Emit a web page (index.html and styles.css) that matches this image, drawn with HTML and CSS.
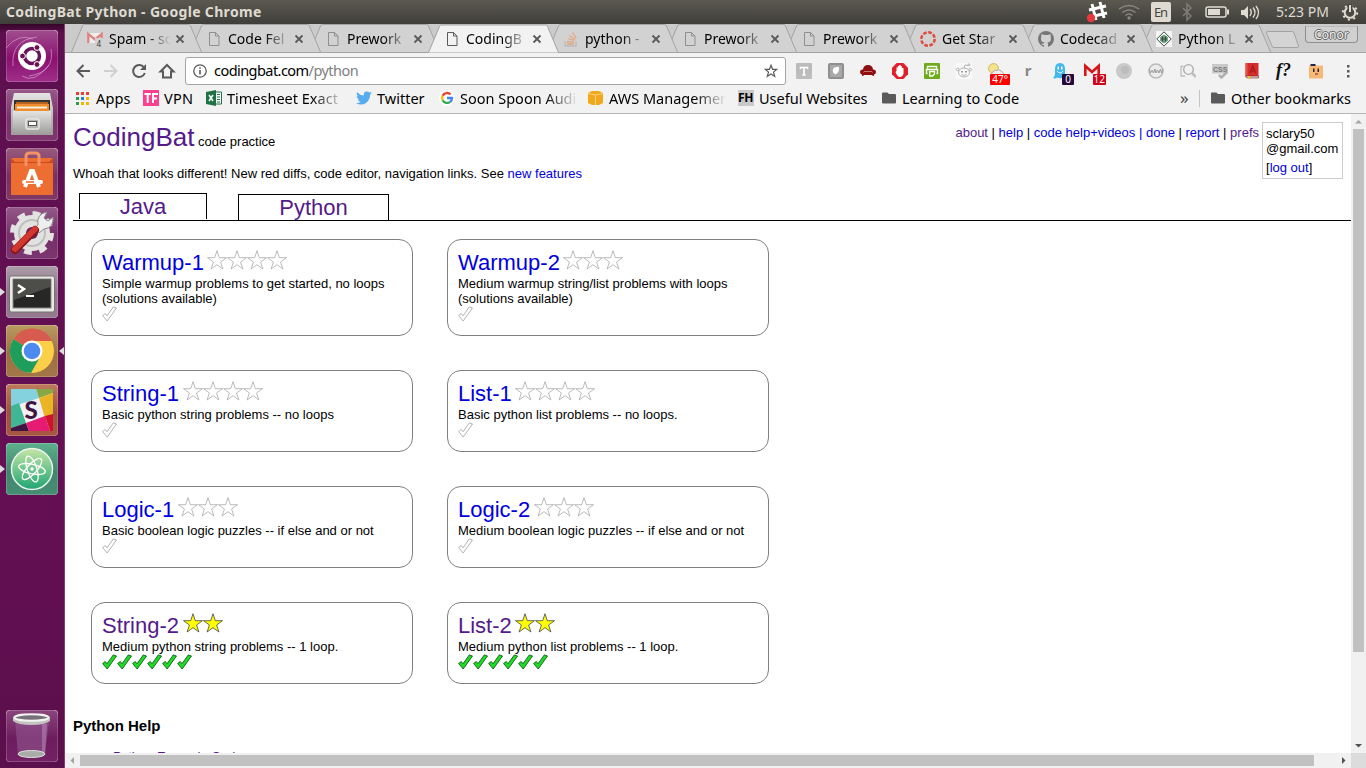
FILE: index.html
```html
<!DOCTYPE html>
<html lang="en">
<head>
<meta charset="utf-8">
<title>CodingBat Python</title>
<link rel="stylesheet" href="styles.css">
</head>
<body>
<svg class="defs" aria-hidden="true">
  <defs>
    <linearGradient id="steel" x1="0" y1="0" x2="0" y2="1"><stop offset="0" stop-color="#e4e4e2"/><stop offset="1" stop-color="#9b9b99"/></linearGradient>
    <linearGradient id="atomGreen" x1="0" y1="0" x2="0" y2="1"><stop offset="0" stop-color="#c5e6a5"/><stop offset="1" stop-color="#1fa574"/></linearGradient>
    <linearGradient id="dash" x1="0" y1="0" x2="0" y2="1"><stop offset="0" stop-color="#a04f8e"/><stop offset=".55" stop-color="#8a0f70"/><stop offset="1" stop-color="#a0308a"/></linearGradient>
  </defs>
  <symbol id="tab" viewBox="0 0 131 28"><path class="tab-shape" d="M.5 28 11.500 2Q12 .5 13.500 .5H117.500Q119 .5 119.500 2L130.500 28"/></symbol>
  <symbol id="page" viewBox="0 0 16 16"><path d="M3.500 1.500h6l3.500 3.500v9.500h-9.500zM9.500 1.500v3.500h3.500" fill="none" stroke="currentColor"/></symbol>
  <symbol id="close" viewBox="0 0 10 10"><path d="m1.500 1.500 7 7m0-7-7 7" stroke="#5a5a5a" stroke-width="1.800"/></symbol>
  <symbol id="folder" viewBox="0 0 14 12"><path d="M0 1.500Q0 .5 1 .5h4.500l1.500 1.500h6q1 0 1 1v7.500q0 1-1 1h-12q-1 0-1-1z" fill="#5a5a5a"/></symbol>
  <symbol id="star" viewBox="0 0 20 20"><path d="m10 .7 2.300 7h7.200l-5.900 4.300 2.300 7-5.900-4.300-5.900 4.300 2.300-7-5.900-4.300h7.200z" fill="currentColor"/></symbol>
  <symbol id="check" viewBox="0 0 15 15"><path d="M.6 9.500 3.300 7.500 5 9.800 11.300 .9 14.500 2 5.200 15z"/></symbol>
</svg>

<header class="panel">
  <span class="panel-title">CodingBat Python - Google Chrome</span>
  <svg class="tray" width="290" height="24" viewBox="1076 0 290 24">
    <g fill="none" stroke="#fff" stroke-width="3"><path d="m1092 4 4 16M1100 2l4 16M1089 10l17-4M1090 17l17-4"/></g>
    <circle cx="1091" cy="18" r="4.200" fill="#e8383f"/>
    <g fill="none" stroke="#89877f" stroke-width="1.500"><path d="M1119 9q10-7 20 0M1122.500 12.500q6.500-5 13 0M1125.500 15.500q3.500-3 7 0"/></g><circle cx="1129" cy="18" r="1.700" fill="#89877f"/>
    <rect x="1151" y="2" width="20" height="20" rx="2" fill="#dfdbd2"/><text x="1154" y="17" class="lang" textLength="14">En</text>
    <path d="m1183 8 8 8-4 4V4l4 4-8 8" fill="none" stroke="#7f7d75" stroke-width="1.500"/>
    <rect x="1206" y="7" width="20" height="10" rx="2" fill="none" stroke="#dfdbd2" stroke-width="1.500"/><path d="M1208 9h12v6h-12zM1227 9.500h2v5h-2z" fill="#dfdbd2"/>
    <path d="M1241 10h3l4-4v13l-4-4h-3z" fill="#dfdbd2"/><path d="M1250 9q2.500 3 0 7M1253 7.500q4 5 0 10M1256 6q5 6.500 0 13" fill="none" stroke="#dfdbd2" stroke-width="1.400"/>
    <text x="1276" y="17" class="clock" textLength="53">5:23 PM</text>
    <circle cx="1350" cy="12.500" r="5.300" fill="none" stroke="#dfdbd2" stroke-width="2"/><circle cx="1350" cy="12.500" r="7.200" fill="none" stroke="#dfdbd2" stroke-width="2" stroke-dasharray="2.200 3.450"/><path d="M1350 4v8" stroke="#45443f" stroke-width="5"/><path d="M1350 5v7" stroke="#dfdbd2" stroke-width="2"/>
  </svg>
</header>

<div class="desktop">
<nav class="launcher">
  <svg class="tile" viewBox="0 0 52 52"><rect class="plate solid" width="52" height="52" rx="4" fill="url(#dash)"/><path d="M7 36Q5 10 31 7M45 19Q49 42 23 46M0 18Q12 3 27 9M16 46Q28 54 43 35" fill="none" stroke="#d8a7cf" opacity=".65"/><circle cx="26" cy="26" r="14" fill="#fff"/><circle cx="26" cy="26" r="7.500" fill="none" stroke="#6a1258" stroke-width="3.500"/><g fill="#6a1258" stroke="#fff"><circle cx="16.500" cy="26" r="2.900"/><circle cx="31" cy="17.500" r="2.900"/><circle cx="31" cy="34.500" r="2.900"/></g></svg>
  <svg class="tile" viewBox="0 0 52 52"><rect class="plate" width="52" height="52" rx="4" fill="#7a2b68"/><path d="M8 4h36l3 15v27H5V18z" fill="url(#steel)"/><path d="M8 11h36v10H8z" fill="#38332e"/><path d="M10 13h32v2H10z" fill="#b96522"/><path d="M9 15h34v7H9z" fill="#ef8b31"/><path d="M11 17.500h30v2H11z" fill="#fff1d8"/><path d="M7 22h38v24H7z" fill="url(#steel)"/><rect x="20" y="30" width="13" height="10" rx="2" fill="#b4b4b2" stroke="#e8e8e6" stroke-width="1.500"/><rect x="22.500" y="32.500" width="8" height="4" fill="#fff" stroke="#555"/></svg>
  <svg class="tile" viewBox="0 0 52 52"><rect class="plate" width="52" height="52" rx="4" fill="#7a2b58"/><path d="M5 10h42v37H5z" fill="#ee6d30"/><path d="M5 10 9 14h34l4-4v5H5z" fill="#c8491c"/><path d="M20 18V8q0-3 4-3h5q4 0 4 3v10" fill="none" stroke="#f29467" stroke-width="3"/><path d="m19 39 6-16h2l6 16" fill="none" stroke="#fff" stroke-width="4"/><path d="M18 34h17" stroke="#fff" stroke-width="4" stroke-linecap="round"/><path d="M20 34h8" stroke="#e9662b" stroke-width="1.500"/></svg>
  <svg class="tile" viewBox="0 0 52 52"><rect class="plate" width="52" height="52" rx="4" fill="#742a66"/><circle cx="26" cy="26" r="18" fill="#e2e2e0"/><circle cx="26" cy="26" r="19" fill="none" stroke="#e2e2e0" stroke-width="6" stroke-dasharray="7.500 7.420"/><circle cx="26" cy="26" r="13" fill="none" stroke="#bfbfbd" stroke-width="2"/><circle cx="26" cy="26" r="6" fill="#6b205a"/><path d="m29 21 3-3Q30 7 41 5l-3 6 4 3 5-4q1 11-9 12l-5 4z" fill="#eee" stroke="#8b8b89"/><path d="m9 43 20-20" stroke="#8a1518" stroke-width="8" stroke-linecap="round"/><path d="m9 42 20-20" stroke="#d13830" stroke-width="6" stroke-linecap="round"/></svg>
  <div class="running"><svg class="tile" viewBox="0 0 52 52"><rect class="plate" width="52" height="52" rx="4" fill="#94808f"/><rect x="3.500" y="10" width="45" height="36" rx="2" fill="#e8e8e6" stroke="#77736f"/><rect x="7" y="13" width="38" height="29" fill="#272725" stroke="#8a8a88"/><path d="M8 14h36v7L8 34z" fill="#4d4d4a"/><path d="m12 19 6 4-6 4" fill="none" stroke="#fff" stroke-width="2.500"/><path d="M20 30h8" stroke="#fff" stroke-width="2"/></svg></div>
  <div class="running focused"><svg class="tile" viewBox="0 0 52 52"><rect class="plate" width="52" height="52" rx="4" fill="#a57e35"/><circle cx="26" cy="26" r="22" fill="#fbcf48"/><path d="M26 26 7.500 14A22 22 0 0 1 46 16H26z" fill="#d85b50"/><path d="M26 26 7.500 14A22 22 0 0 0 25 48l9-16z" fill="#1f9d5c"/><circle cx="26" cy="26" r="10.500" fill="#fff"/><circle cx="26" cy="26" r="8.300" fill="#4d8af0"/></svg></div>
  <div class="running"><svg class="tile" viewBox="0 0 52 52"><rect class="plate" width="52" height="52" rx="4" fill="#aa562e"/><svg x="5" y="5" width="42" height="42" viewBox="0 0 42 42"><rect width="42" height="42" rx="4" fill="#f4f1f2"/><path d="M0 0h25l3 9L0 18z" fill="#84d2dd"/><path d="M25 0h17v4l-14 5z" fill="#88a845"/><path d="M28 9 42 4v22l-8 3z" fill="#ebb424"/><path d="M0 17 8 14l7 20-15 5z" fill="#40b794"/><path d="M0 39 15 34l3 8H0z" fill="#3f1541"/><path d="M15 34 34 27l5 15H18z" fill="#e61b72"/><path d="m34 27 8-2v17h-3z" fill="#ce112d"/></svg><text x="18.500" y="34.500" class="slack">S</text></svg></div>
  <div class="running"><svg class="tile" viewBox="0 0 52 52"><rect class="plate" width="52" height="52" rx="4" fill="#2f9a6b"/><circle cx="26" cy="26" r="20.500" fill="url(#atomGreen)" stroke="#eef5ee" stroke-width="1.500"/><g fill="none" stroke="#fff" stroke-width="1.300"><ellipse cx="26" cy="26" rx="13.500" ry="4.800" transform="rotate(12 26 26)"/><ellipse cx="26" cy="26" rx="13.500" ry="4.800" transform="rotate(72 26 26)"/><ellipse cx="26" cy="26" rx="13.500" ry="4.800" transform="rotate(132 26 26)"/></g><circle cx="26" cy="26" r="1.700" fill="#fff"/></svg></div>
  <svg class="tile trash" viewBox="0 0 52 52"><rect class="plate" width="52" height="52" rx="4" fill="#691258"/><path d="M9 10h34l-4 35q-13 5-27 0z" fill="#8d4f8a" opacity=".7"/><path d="M36 14h5l-2 29h-3z" fill="#c7a4c6" opacity=".4"/><ellipse cx="25.500" cy="44" rx="13.500" ry="3.500" fill="#a9aca7" stroke="#dedfdc"/><path d="M7 8q0-4 18.500-4T44 8v3q-5 4-18.500 4T7 11z" fill="#c2c2c0"/><ellipse cx="25.500" cy="7.500" rx="17" ry="3.300" fill="#77717a" stroke="#f3f3f1" stroke-width="2"/></svg>
</nav>

<main class="browser">
  <div class="tabstrip">
    <div class="tab t1"><svg class="tab-bg"><use href="#tab"/></svg><svg class="fav" viewBox="0 0 16 16"><path d="M0 2h16v10H0z" fill="#eee"/><path d="M1.300 12V3L8 8.500 14.700 3v9" fill="none" stroke="#dc8580" stroke-width="2.400"/><path d="M8 7h8v9H8z" fill="#d2d2d2"/><text x="9.500" y="15.500" class="count">4</text></svg><span class="label">Spam - sc</span><svg class="x"><use href="#close"/></svg></div>
    <div class="tab t2"><svg class="tab-bg"><use href="#tab"/></svg><svg class="fav"><use href="#page"/></svg><span class="label">Code Fel</span><svg class="x"><use href="#close"/></svg></div>
    <div class="tab t3"><svg class="tab-bg"><use href="#tab"/></svg><svg class="fav"><use href="#page"/></svg><span class="label">Prework</span><svg class="x"><use href="#close"/></svg></div>
    <div class="tab active"><svg class="tab-bg"><use href="#tab"/></svg><svg class="fav"><use href="#page"/></svg><span class="label">CodingB</span><svg class="x"><use href="#close"/></svg></div>
    <div class="tab t5"><svg class="tab-bg"><use href="#tab"/></svg><svg class="fav" viewBox="0 0 16 16"><path d="M2 10v5h11v-5" fill="none" stroke="#bbb" stroke-width="1.300"/><path d="M4 13h7M4 10.500l7 .8M4.700 7.500l6.600 2M6.500 4.500l5.600 4M9.500 1.500l3.800 5.700" stroke="#e5a57c" stroke-width="1.300"/></svg><span class="label">python -</span><svg class="x"><use href="#close"/></svg></div>
    <div class="tab t6"><svg class="tab-bg"><use href="#tab"/></svg><svg class="fav"><use href="#page"/></svg><span class="label">Prework</span><svg class="x"><use href="#close"/></svg></div>
    <div class="tab t7"><svg class="tab-bg"><use href="#tab"/></svg><svg class="fav"><use href="#page"/></svg><span class="label">Prework</span><svg class="x"><use href="#close"/></svg></div>
    <div class="tab t8"><svg class="tab-bg"><use href="#tab"/></svg><svg class="fav" viewBox="0 0 16 16"><circle cx="8" cy="8" r="6.700" fill="none" stroke="#e24a3b" stroke-width="2.500" stroke-dasharray="3.700 1.560"/></svg><span class="label">Get Star</span><svg class="x"><use href="#close"/></svg></div>
    <div class="tab t9"><svg class="tab-bg"><use href="#tab"/></svg><svg class="fav" viewBox="0 0 16 16"><circle cx="8" cy="8" r="8" fill="#777"/><path d="M3.500 3 6 4h4l2.500-1 .3 3q1 5-3.300 5.500.8 1 .5 4.500H6v-2q-2 .5-2.800-1.300L6 12.500l.5-1Q2 11 3.200 6z" fill="#d2d2d2"/></svg><span class="label">Codecad</span><svg class="x"><use href="#close"/></svg></div>
    <div class="tab t10"><svg class="tab-bg"><use href="#tab"/></svg><svg class="fav" viewBox="0 0 16 16"><path d="M0 0h16v16H0z" fill="#f4f4f4"/><path d="m8 .8 7.200 7.200L8 15.200.8 8z" fill="#fff" stroke="#444"/><path d="M4.500 6 8 4l3.500 2v4L8 12l-3.500-2z" fill="#6e9a80" stroke="#3a5"  stroke-width=".6"/><path d="M5 8h6M6.500 5.500v5M9.500 5.500v5" stroke="#444"/></svg><span class="label">Python L</span><svg class="x"><use href="#close"/></svg></div>
    <svg class="newtab" width="36" height="19"><path d="M3 1.500h24q1.500 0 2 1.500l4.500 13q.5 1.500-1 1.500H9q-1.500 0-2-1.500L1.500 3q-.5-1.500 1.500-1.500z" fill="#d4d4d4" stroke="#a3a3a3"/></svg>
    <span class="profile">Conor</span>
  </div>

  <div class="toolbar">
    <svg class="nav-icons" width="120" height="34" viewBox="65 54 120 34"><g fill="none" stroke="#5a5a5a" stroke-width="2"><path d="M90 71H78M83.500 65 77.500 71l6 6"/><path d="M104 71h12M110.500 65l6 6-6 6" stroke="#d0d0d0"/><path d="M144 67.500A6 6 0 1 0 144.800 73"/><path d="M160.500 71.500 167 65l6.500 6.500h-2.500v6h-8v-6z"/></g><path d="M146 64v6h-6z" fill="#5a5a5a"/></svg>
    <div class="omnibox"><svg width="14" height="14" viewBox="0 0 14 14"><circle cx="7" cy="7" r="6.200" fill="none" stroke="#5a5a5a" stroke-width="1.300"/><path d="M7 6v4.500M7 3.200v1.600" stroke="#5a5a5a" stroke-width="1.600"/></svg><span class="url">codingbat.com<span class="path">/python</span></span><svg class="bookmark" width="14" height="14" viewBox="0 0 14 14"><path d="m7 1.300 1.600 4h4.200L9.500 8.100l1.200 4.300L7 10l-3.700 2.400 1.200-4.300L1.200 5.300h4.200z" fill="none" stroke="#5a5a5a" stroke-width="1.200"/></svg></div>
    <div class="extensions">
      <svg viewBox="0 0 16 16"><rect width="16" height="16" rx="1" fill="#bcbcbc"/><path d="M4.500 6V4.500h7V6M8 4.500v7.500M6.300 12h3.400" fill="none" stroke="#fff" stroke-width="1.600"/></svg>
      <svg viewBox="0 0 16 16"><rect width="16" height="16" rx="2" fill="#8f8f8f"/><rect x="2" y="2" width="12" height="12" fill="#a9a9a9"/><path d="M5 6q1-2.500 6-2 .5 5.500-3.500 7.500Q4 10 5 6z" fill="#fff"/></svg>
      <svg viewBox="0 0 16 16"><path d="M3 6.500Q3.500 2 8 2t5 4.500q3-.5 3 2.500 0 2-2 2.500V13h-1.500v-1h-9v1H2v-1.500Q0 11 0 9q0-3 3-2.500z" fill="#900d10"/><path d="M3.500 9.500Q4 8 5 8.500h6q1-.5 1.500 1" fill="none" stroke="#d98a85" stroke-width=".8"/></svg>
      <svg viewBox="0 0 16 16"><path d="M4.700 0h6.600L16 4.700v6.600L11.300 16H4.700L0 11.300V4.700z" fill="#e0202a"/><path d="M4.500 8V4.500h1.300V3h1.400V2h1.500v1.200H10V5h1.500v6q-1 3-4 3-2 0-4-5z" fill="#fff"/></svg>
      <svg viewBox="0 0 16 16"><rect width="16" height="16" rx="1" fill="#6eab1c"/><path d="M3.500 5.500V3.500h9v2M3.500 10.500h-1v-4h11v4h-1" fill="none" stroke="#fff" stroke-width="1.400"/><path d="M5.700 8.500h4.800v2.500l-2 2H5.700z" fill="#6eab1c" stroke="#fff" stroke-width="1.300"/></svg>
      <svg viewBox="0 0 16 16"><path d="M0 0h16v16H0z" fill="#f9f9f9"/><g fill="none" stroke="#b3b3b3"><ellipse cx="8" cy="9.500" rx="5.500" ry="4.500"/><path d="m8 5 1-3 3 .7M5.500 11.500q2.500 1.700 5 0"/><circle cx="1.800" cy="6.500" r="1.300"/><circle cx="14.200" cy="6.500" r="1.300"/><circle cx="13" cy="1.800" r="1"/></g><path d="M5 8h2v1.500H5zM9 8h2v1.500H9z" fill="#999"/></svg>
      <span class="ext"><svg viewBox="0 0 16 16"><circle cx="5.500" cy="5.500" r="4.900" fill="#f4e28e" stroke="#d1b762"/><path d="M3 12q1-4 5-5l1 1 1-1.500q4 1 5.500 4V12z" fill="#eee" stroke="#aaa"/></svg><b class="badge hot">47°</b></span>
      <span class="ext r">r</span>
      <span class="ext"><svg viewBox="0 0 16 16"><path d="M3 6q0-6 5-6t5 6v5q0 3 3 4-3 1-5-.5-3 1.500-5.500 0Q3 16 1 15q2-2 2-4z" fill="#43b8ec"/><path d="M5.500 3.500h1.500v3H5.500zM9 3.500h1.500v3H9z" fill="#fff"/><path d="M5 8q3 4 6 0" fill="none" stroke="#fff"/></svg><b class="badge zero">0</b></span>
      <span class="ext"><svg viewBox="0 0 16 16"><path d="M0 2h16v11H0z" fill="#f7eeee"/><path d="M1.300 13V3L8 9l6.700-6v10" fill="none" stroke="#d5161c" stroke-width="2.600"/></svg><b class="badge mail">12</b></span>
      <svg viewBox="0 0 16 16"><circle cx="8" cy="8" r="8" fill="#c8c8c8"/><circle cx="9" cy="7" r="5" fill="#bdbdbd" stroke="#cfcfcf"/></svg>
      <svg viewBox="0 0 16 16"><circle cx="8" cy="8" r="7" fill="#ececec" stroke="#bababa" stroke-width="1.600"/><path d="m1 6 1.500 4L4 7l1.500 3L7 6l1 4 1.500-3 1.500 3 1.500-4 1 4L15 6" fill="none" stroke="#999"/></svg>
      <svg viewBox="0 0 16 16"><g fill="none" stroke="#bdbdbd" stroke-width="1.300"><path d="M3.500 3.500H1V13h4"/><circle cx="8.500" cy="6.500" r="4.800" stroke="#ababab"/><path d="m12 10 4 4" stroke-width="2.500"/></g></svg>
      <svg viewBox="0 0 16 16"><path d="M0 1h16v9.500H0z" fill="#c9c9c9"/><text x="1" y="8.500" class="css">CSS</text><path d="m7 12 2.500 2.500L15 9" fill="none" stroke="#b0b0b0" stroke-width="2.500"/></svg>
      <svg viewBox="0 0 16 16"><path d="M1.500 0h13v13h-13z" fill="#d72c2c"/><path d="M1.500 0h2v13h-2z" fill="#e6544c"/><path d="M1.500 13h13v2H4q-2.500 0-2.500-2z" fill="#d8cfc8" stroke="#8a1f1f" stroke-width=".6"/><path d="M4 13h2v3l-1-1-1 1z" fill="#efc020"/><path d="m6 10 2.800-7L11.500 10M7 7.800h3.500" fill="none" stroke="#a01c1c" stroke-width="1.200"/></svg>
      <span class="ext fn">f?</span>
      <svg viewBox="0 0 16 16"><path d="M1 2.500h14V15.500H1z" fill="#f8b878"/><path d="M2.500 1h5v2h-5z" fill="#252646"/><path d="M5 5.500h1.500v3.500H5zM9.500 5.500h1.500v3.500H9.500z" fill="#252525"/><path d="M7 11h3" stroke="#5a2f18"/></svg>
      <svg viewBox="0 0 16 16"><path d="M7 2h2.500v2.500H7zM7 7h2.500v2.500H7zM7 12h2.500v2.500H7z" fill="#5a5a5a"/></svg>
    </div>
  </div>

  <div class="bookmarks">
    <span class="bm apps"><svg width="13" height="13"><path d="M0 0h3v3H0zM5 0h3v3H5zM10 0h3v3h-3z" fill="#eb4132"/><path d="M0 5h3v3H0z" fill="#2c9e4b"/><path d="M5 5h3v3H5z" fill="#2a7de1"/><path d="M10 5h3v3h-3z" fill="#f5b400"/><path d="M0 10h3v3H0z" fill="#2c9e4b"/><path d="M5 10h3v3H5zM10 10h3v3h-3z" fill="#f5b400"/></svg>Apps</span>
    <span class="bm vpn"><svg width="16" height="16"><path d="M0 0h16v16H0z" fill="#fc3f8e"/><path d="M1.500 4H8M4.700 4v9M10 13V4h5M10 8.500h4" fill="none" stroke="#fff" stroke-width="2"/></svg>VPN</span>
    <span class="bm excel"><svg width="16" height="16"><path d="M9 2h6.500v12H9z" fill="#fff" stroke="#1f7244"/><path d="M11 4.500h3M11 7h3M11 9.500h3M11 12h3" stroke="#1f7244"/><path d="m0 2 10-2v16L0 14z" fill="#1f7244"/><path d="m3 5 4 6M7 5l-4 6" stroke="#fff" stroke-width="1.500"/></svg><span class="fade">Timesheet Exact</span></span>
    <span class="bm twitter"><svg width="16" height="16"><path d="M0 13q3 .3 4.800-1.300-2.300-.2-3-2.300h1.400Q.7 8.700.7 6l1.400.4Q-.1 4.500 1.200 2.200 4 5.400 7.900 5.600 7.200 2 10.500 1.500q1.700-.1 2.800 1l2-.8q-.2 1-1.400 1.800l1.900-.4q-.7 1-1.700 1.700Q14.100 10 10 13q-5 3-10 0z" fill="#55acee"/></svg>Twitter</span>
    <span class="bm google"><svg width="16" height="16" viewBox="0 0 16 16"><circle cx="8" cy="8" r="8" fill="#fff"/><g fill="none" stroke-width="2.300"><path d="M11.500 4.400A5 5 0 0 0 3.600 5.800" stroke="#ea4335"/><path d="M3.600 5.800a5 5 0 0 0 0 4.400" stroke="#fbbc05"/><path d="M3.600 10.200a5 5 0 0 0 7.600 1.600" stroke="#34a853"/><path d="M11.200 11.800A5 5 0 0 0 13 8H8" stroke="#4285f4"/></g></svg><span class="fade">Soon Spoon Audi</span></span>
    <span class="bm aws"><svg width="15" height="14"><path d="m0 2 4-2h7l4 2v10l-4 2H4l-4-2z" fill="#f0a91c"/><path d="M0 2.500 7.500 4 15 2.500M7.500 4v10" fill="none" stroke="#fbd47f"/></svg><span class="fade">AWS Managemen</span></span>
    <span class="bm useful"><i class="fh">FH</i>Useful Websites</span>
    <span class="bm learn"><svg width="14" height="12"><use href="#folder"/></svg>Learning to Code</span>
    <span class="more">»</span>
    <span class="bm other"><svg width="14" height="12"><use href="#folder"/></svg>Other bookmarks</span>
  </div>

  <div class="viewport">
    <div class="page">
      <div class="masthead">
        <div class="brand"><a class="seen" href="#">CodingBat</a> code practice</div>
        <div class="links"><a class="seen" href="#">about</a> | <a href="#">help</a> | <a href="#">code help+videos</a> <a href="#">|</a> <a href="#">done</a> | <a href="#">report</a> | <a class="seen" href="#">prefs</a></div>
        <div class="account"><div>sclary50<br>@gmail.com</div><div class="logout">[<a href="#">log out</a>]</div></div>
      </div>
      <p class="notice">Whoah that looks different! New red diffs, code editor, navigation links. See <a href="#">new features</a></p>
      <div class="lang-tabs"><a class="java seen" href="#">Java</a><a class="python seen" href="#">Python</a></div>
      <div class="cards">
        <section class="card"><h2><a href="#">Warmup-1</a><svg><use href="#star"/></svg><svg><use href="#star"/></svg><svg><use href="#star"/></svg><svg><use href="#star"/></svg></h2><p>Simple warmup problems to get started, no loops<br>(solutions available)</p><div class="marks"><svg><use href="#check"/></svg></div></section>
        <section class="card"><h2><a href="#">Warmup-2</a><svg><use href="#star"/></svg><svg><use href="#star"/></svg><svg><use href="#star"/></svg></h2><p>Medium warmup string/list problems with loops<br>(solutions available)</p><div class="marks"><svg><use href="#check"/></svg></div></section>
        <section class="card"><h2><a href="#">String-1</a><svg><use href="#star"/></svg><svg><use href="#star"/></svg><svg><use href="#star"/></svg><svg><use href="#star"/></svg></h2><p>Basic python string problems -- no loops</p><div class="marks"><svg><use href="#check"/></svg></div></section>
        <section class="card"><h2><a href="#">List-1</a><svg><use href="#star"/></svg><svg><use href="#star"/></svg><svg><use href="#star"/></svg><svg><use href="#star"/></svg></h2><p>Basic python list problems -- no loops.</p><div class="marks"><svg><use href="#check"/></svg></div></section>
        <section class="card"><h2><a href="#">Logic-1</a><svg><use href="#star"/></svg><svg><use href="#star"/></svg><svg><use href="#star"/></svg></h2><p>Basic boolean logic puzzles -- if else and or not</p><div class="marks"><svg><use href="#check"/></svg></div></section>
        <section class="card"><h2><a href="#">Logic-2</a><svg><use href="#star"/></svg><svg><use href="#star"/></svg><svg><use href="#star"/></svg></h2><p>Medium boolean logic puzzles -- if else and or not</p><div class="marks"><svg><use href="#check"/></svg></div></section>
        <section class="card done"><h2><a class="seen" href="#">String-2</a><svg><use href="#star"/></svg><svg><use href="#star"/></svg></h2><p>Medium python string problems -- 1 loop.</p><div class="marks"><svg><use href="#check"/></svg><svg><use href="#check"/></svg><svg><use href="#check"/></svg><svg><use href="#check"/></svg><svg><use href="#check"/></svg><svg><use href="#check"/></svg></div></section>
        <section class="card done"><h2><a class="seen" href="#">List-2</a><svg><use href="#star"/></svg><svg><use href="#star"/></svg></h2><p>Medium python list problems -- 1 loop.</p><div class="marks"><svg><use href="#check"/></svg><svg><use href="#check"/></svg><svg><use href="#check"/></svg><svg><use href="#check"/></svg><svg><use href="#check"/></svg><svg><use href="#check"/></svg></div></section>
      </div>
      <h3 class="help-title">Python Help</h3>
      <ul class="help-list"><li><a class="seen" href="#">Python Example Code</a></li></ul>
    </div>
    <div class="vbar"><svg width="15" height="15"><path d="M4 9.500 7.500 6 11 9.500z" fill="#a3a3a3"/></svg><i class="vthumb"></i><svg class="end" width="15" height="15"><path d="M4 6h7L7.500 9.500z" fill="#505050"/></svg></div>
    <div class="hbar"><svg width="15" height="15"><path d="M9 4v7L5.500 7.500z" fill="#a3a3a3"/></svg><i class="hthumb"></i><svg class="end" width="15" height="15"><path d="M6 4v7l3.500-3.500z" fill="#505050"/></svg></div>
    <div class="corner"></div>
  </div>
</main>
</div>
</body>
</html>
```
FILE: styles.css
```css
* { box-sizing: border-box; }
body { margin: 0; width: 1366px; height: 768px; overflow: hidden; font-family: "Liberation Sans", Arial, sans-serif; font-size: 13px; color: #000; }
svg { display: block; flex: none; }
.defs { position: absolute; width: 0; height: 0; }

.panel { height: 24px; display: flex; align-items: center; justify-content: space-between; background: linear-gradient(#5b594f, #3f3e3a); color: #dfdbd2; }
.panel-title { padding-left: 6px; font: bold 14px/24px "Noto Sans", sans-serif; letter-spacing: .33px; }
.lang { font: 13px "Noto Sans", sans-serif; fill: #45443f; }
.clock { font: 14px "Noto Sans", sans-serif; fill: #dfdbd2; }

.desktop { display: flex; height: 744px; }
.launcher { width: 65px; flex: none; display: flex; flex-direction: column; gap: 7px; padding: 6px 0 6px 6px; background: linear-gradient(#350528 0, #5d0f4e 9px, #650f55 60%, #5b0f4b); border-right: 1px solid #823e75; }
.tile { width: 52px; height: 52px; border-radius: 4px; background: linear-gradient(#fff, rgba(255, 255, 255, .2) 55%, rgba(255, 255, 255, .35)); }
.tile svg { background: none; }
.plate { stroke: rgba(255, 255, 255, .35); fill-opacity: .78; }
.plate.solid { fill-opacity: 1; }
.trash { margin-top: auto; }
.running { position: relative; width: 58px; height: 52px; }
.running::before { content: ""; position: absolute; left: -6px; top: 22px; border: 4px solid transparent; border-left: 5px solid #ddd; border-right: 0; }
.focused::after { content: ""; position: absolute; right: 0; top: 22px; border: 4px solid transparent; border-right: 5px solid #ddd; border-left: 0; }
.slack { font: 900 24px "Lato", sans-serif; fill: #3f1541; }

.browser { width: 1301px; display: flex; flex-direction: column; background: #f2f2f2; font-family: "Noto Sans", sans-serif; }
.tabstrip { height: 29px; flex: none; display: flex; padding-left: 6px; background: #cbcbcb; border-bottom: 1px solid #a3a3a3; position: relative; }
.tab { position: relative; width: 131px; height: 28px; margin-right: -12px; flex: none; display: flex; align-items: center; padding-left: 16px; padding-top: 2px; color: #8f8f8f; }
.t8, .t9, .t10 { margin-right: -13px; }
.t1 { z-index: 9; } .t2 { z-index: 8; } .t3 { z-index: 7; } .active { z-index: 10; } .t5 { z-index: 6; } .t6 { z-index: 5; } .t7 { z-index: 4; } .t8 { z-index: 3; } .t9 { z-index: 2; } .t10 { z-index: 1; }
.tab-bg { position: absolute; left: 0; top: 0; width: 131px; height: 28px; z-index: -1; fill: #d2d2d2; }
.tab-shape { stroke: #a3a3a3; stroke-width: 1; }
.active { color: #5a5a5a; height: 29px; padding-top: 1px; }
.active .tab-bg { fill: #f2f2f2; height: 29px; }
.fav { width: 16px; height: 16px; }
.count { font: 8px "Noto Sans", sans-serif; fill: #333; }
.label { margin-left: 6px; width: 62px; white-space: nowrap; color: #000; font-size: 14px; line-height: 20px; -webkit-mask-image: linear-gradient(90deg, #000 36px, transparent 62px); mask-image: linear-gradient(90deg, #000 36px, transparent 62px); }
.x { width: 10px; height: 10px; margin-left: 4px; }
.newtab { margin: 6px 0 0 7px; }
.profile { margin: 2px 0 0 4px; width: 53px; height: 17px; border: 1px solid #8f8f8f; border-top-color: #bbb; border-radius: 0 0 4px 4px; background: #d0d0d0; color: #f3f3f3; font-size: 12px; line-height: 15px; text-align: center; text-shadow: 1px 0 #666, -1px 0 #666, 0 1px #666, 0 -1px #666; }

.toolbar { height: 34px; flex: none; display: flex; margin-top: 1px; }
.omnibox { width: 601px; height: 28px; margin-top: 3px; border: 1px solid #a4a4a4; border-radius: 3px; background: #fff; display: flex; align-items: center; padding: 0 7px; font-size: 14.500px; }
.url { margin-left: 7px; margin-top: -2px; color: #000; letter-spacing: -.6px; letter-spacing: -.55px; }
.path { color: #808080; }
.bookmark { margin-left: auto; }
.extensions { display: flex; align-items: center; margin-left: 10px; gap: 16px; }
.extensions svg { width: 16px; height: 16px; }
.ext { position: relative; width: 16px; height: 16px; }
.badge { position: absolute; right: -6px; top: 11px; height: 11px; padding: 0 2px; border-radius: 1px; color: #fff; font: 10px/11px "Noto Sans", sans-serif; }
.hot { background: #f00; } .zero { background: #26093b; padding: 0 3px; } .mail { background: #d1021a; padding: 0 1px; }
.r { font-size: 15px; line-height: 14px; font-weight: bold; color: #888; text-align: center; }
.fn { font: italic bold 18px/15px "Liberation Serif", serif; color: #111; }
.css { font: bold 7px "Liberation Sans", sans-serif; fill: #777; }

.bookmarks { height: 26px; flex: none; display: flex; align-items: center; padding: 0 0 5px 11px; border-bottom: 1px solid #b4b4b4; font-size: 14.500px; line-height: 20px; white-space: nowrap; }
.bm { display: flex; align-items: center; gap: 5px; flex: none; }
.apps { width: 67px; gap: 7px; letter-spacing: .15px; } .vpn { width: 63px; letter-spacing: .3px; } .excel { width: 150px; } .twitter { width: 83px; } .google { width: 149px; } .aws { width: 150px; gap: 6px; } .useful { width: 144px; } .learn { width: 298px; gap: 6px; }
.fade { width: 116px; -webkit-mask-image: linear-gradient(90deg, #000 85px, transparent 118px); mask-image: linear-gradient(90deg, #000 85px, transparent 118px); }
.fh { width: 16px; height: 16px; background: #c9c9c9; font: bold 12px/16px "Noto Sans", sans-serif; letter-spacing: -.4px; }
.more { width: 19px; color: #444; font-size: 17px; }
.other { border-left: 1px solid #c4c4c4; height: 17px; padding-left: 11px; gap: 6px; }

.viewport { flex: 1; min-height: 0; display: grid; grid-template: minmax(0, 1fr) 15px / 1286px 15px; background: #fff; font-family: "Liberation Sans", Arial, sans-serif; }
.page { padding: 8px 0 0 8px; overflow: hidden; line-height: 15px; }
a { color: #00d; text-decoration: none; }
a.seen { color: #551a8b; }
.masthead { display: flex; height: 44px; padding-right: 8px; }
.brand { flex: 1; line-height: 30px; }
.brand a { font-size: 26px; }
.links { padding-top: 3px; margin-right: 3px; }
.account { width: 81px; height: 57px; border: 1px solid #ccc; padding: 3px; }
.logout { margin-top: 4px; }
.notice { margin: 0; height: 27px; }
.lang-tabs { height: 28px; display: flex; align-items: flex-start; padding-left: 6px; border-bottom: 1px solid #000; font-size: 22px; line-height: 25px; text-align: center; }
.java { width: 128px; height: 26px; margin-right: 31px; border: 1px solid #000; border-bottom: 0; }
.python { width: 151px; height: 26px; margin-top: 1px; border: 1px solid #000; border-bottom: 0; }
.cards { display: grid; grid-template-columns: 322px 322px; gap: 34px; padding: 18px 0 0 18px; }
.card { border: 1px solid #808080; border-radius: 14px; padding: 10px 10px 14px; }
.card h2 { display: flex; margin: 0; height: 26px; font-weight: normal; font-size: 22px; line-height: 26px; }
.card h2 a { margin-right: 3.600px; }
.card h2 svg { width: 20px; height: 20px; color: #fff; stroke: #aaa; stroke-width: .8; }
.card.done h2 svg { color: #ff0; stroke: #444; }
.card p { margin: 0; }
.marks { display: flex; height: 15px; }
.marks svg { width: 15px; height: 15px; fill: #fff; stroke: #aaa; stroke-width: .9; }
.done .marks svg { fill: #1fdb25; stroke: #0b5f14; }
.help-title { margin: 33px 0 0; font-size: 15px; line-height: 18px; }
.help-list { margin: 14px 0 0; padding-left: 40px; }
.vbar, .hbar, .corner { background: #f1f1f1; }
.vbar { display: flex; flex-direction: column; align-items: center; }
.vthumb { width: 11px; height: 523px; background: #c1c1c1; }
.hbar { display: flex; align-items: center; }
.hthumb { width: 1234px; height: 11px; background: #c1c1c1; }
.vbar .end { margin-top: auto; }
.hbar .end { margin-left: auto; }
.viewport .corner { background: #dcdcdc; }
```
